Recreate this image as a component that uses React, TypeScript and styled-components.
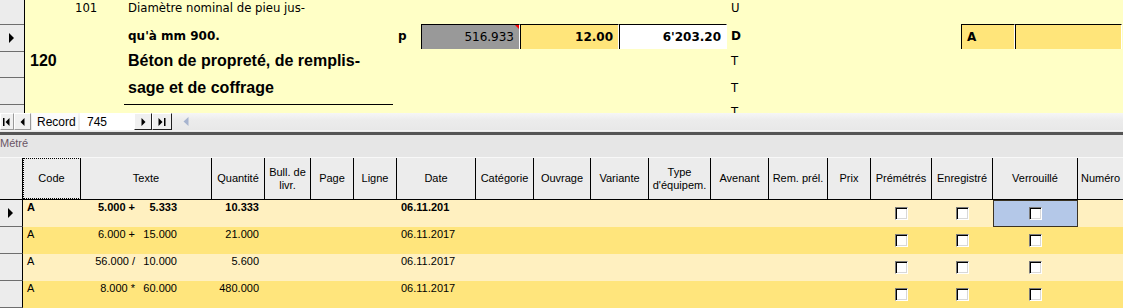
import React from 'react';
import styled, { createGlobalStyle, css } from 'styled-components';

const GlobalStyle = createGlobalStyle`
  html, body { margin: 0; padding: 0; background: #e6e6e6; }
  body {
    font-family: "Liberation Sans", Arial, sans-serif;
    font-size: 11px;
    color: #000;
    overflow: hidden;
  }
  * { box-sizing: border-box; }
`;

const TAHOMA = `"DejaVu Sans", "Liberation Sans", sans-serif`;
const ARIAL = `"Liberation Sans", Arial, sans-serif`;

const Screen = styled.div`
  width: 1123px;
  height: 308px;
  overflow: hidden;
  display: flex;
  flex-direction: column;
  background: #e6e6e6;
`;

/* ---------- top form ---------- */

const FormArea = styled.div`
  height: 113px;
  flex: none;
  display: flex;
  background: #ffffc6;
  overflow: hidden;
`;

const SelectorColumn = styled.div`
  width: 25px;
  flex: none;
  background: #ececec;
  border-right: 1px solid #000;
  display: flex;
  flex-direction: column;
`;

const SelectorCell = styled.div<{ $h: number; $last?: boolean }>`
  height: ${(p) => p.$h}px;
  flex: none;
  border-bottom: ${(p) => (p.$last ? 'none' : '1px solid #6e6e6e')};
  display: flex;
  align-items: center;
  justify-content: center;
`;

const FormGrid = styled.div`
  flex: 1;
  display: grid;
  grid-template-columns: 47px 52px 269px 28px 99px 99px 108px 234px 54px 107px 1fr;
  grid-template-rows: 24px 26px 27px 28px 1fr;
`;

const FormText = styled.div<{
  $col: number;
  $row: number;
  $bold?: boolean;
  $size?: number;
  $family?: string;
  $pl?: number;
  $lift?: number;
  $underline?: boolean;
}>`
  grid-column: ${(p) => p.$col};
  grid-row: ${(p) => p.$row};
  display: flex;
  align-items: center;
  white-space: nowrap;
  font-family: ${(p) => p.$family || TAHOMA};
  font-size: ${(p) => p.$size || 11.7}px;
  font-weight: ${(p) => (p.$bold ? 700 : 400)};
  padding-left: ${(p) => p.$pl ?? 4}px;
  padding-bottom: ${(p) => p.$lift ?? 0}px;
  ${(p) =>
    p.$underline &&
    css`
      border-bottom: 1px solid #000;
    `}
`;

const FieldBox = styled.div<{ $col: number; $tone: 'gray' | 'yellow' | 'white'; $bold?: boolean; $left?: boolean }>`
  grid-column: ${(p) => p.$col};
  grid-row: 2;
  height: 25px;
  position: relative;
  border-top: 1px solid #000;
  border-left: 1px solid #000;
  border-right: 1px solid #fff;
  background: ${(p) => (p.$tone === 'gray' ? '#999999' : p.$tone === 'yellow' ? '#ffe57a' : '#ffffff')};
  display: flex;
  align-items: center;
  justify-content: ${(p) => (p.$left ? 'flex-start' : 'flex-end')};
  padding: 0 5px 1px 5px;
  font-family: ${TAHOMA};
  font-size: 12px;
  font-weight: ${(p) => (p.$bold ? 700 : 400)};
  color: #000;
`;

const CommentMark = styled.span`
  position: absolute;
  top: 0;
  right: 0;
  width: 0;
  height: 0;
  border-top: 4px solid #ff0000;
  border-left: 4px solid transparent;
`;

/* ---------- navigation bar ---------- */

const NavBar = styled.div`
  height: 18px;
  flex: none;
  display: flex;
  align-items: stretch;
  background: linear-gradient(#f6f6f6 0%, #ececec 40%, #e8e8e8 100%);
  border-bottom: 1px solid #f2f2f2;
`;

const NavButton = styled.div<{ $w: number; $dark?: boolean }>`
  width: ${(p) => p.$w}px;
  flex: none;
  display: flex;
  align-items: center;
  justify-content: center;
  background: #f0f0f0;
  border: 1px solid;
  border-color: #ffffff ${(p) => (p.$dark ? '#202020' : '#9a9a9a')} ${(p) => (p.$dark ? '#202020' : '#9a9a9a')} #ffffff;
`;

const NavLabel = styled.div`
  width: 46px;
  flex: none;
  margin-left: 1px;
  display: flex;
  align-items: center;
  padding-left: 5px;
  background: #fbfbfb;
  font-family: ${ARIAL};
  font-size: 12px;
`;

const NavInput = styled.div`
  width: 54px;
  flex: none;
  margin-left: 2px;
  display: flex;
  align-items: center;
  padding-left: 7px;
  background: #ffffff;
  font-family: ${ARIAL};
  font-size: 12px;
`;

const ScrollArrow = styled.div`
  width: 20px;
  flex: none;
  display: flex;
  align-items: center;
  justify-content: center;
  margin-left: 4px;
`;

const Separator = styled.div`
  height: 4px;
  flex: none;
  background: #555555;
  border-top: 1px solid #e8e8e8;
`;

const Caption = styled.div`
  height: 22px;
  flex: none;
  padding: 2px 0 0 0;
  font-family: ${ARIAL};
  font-size: 11px;
  color: #6a5565;
  background: #e6e6e6;
`;

/* ---------- datasheet ---------- */

const COLUMNS = '23px 58px 131px 53px 46px 43px 43px 79px 58px 57px 58px 62px 58px 59px 43px 61px 61px 85px 1fr';

const HeaderRow = styled.div`
  height: 43px;
  flex: none;
  display: grid;
  grid-template-columns: ${COLUMNS};
  background: #ececec;
  border-top: 1px solid #f8f8f8;
  border-bottom: 1px solid #000;
`;

const HeaderCell = styled.div<{ $focus?: boolean; $last?: boolean }>`
  display: flex;
  align-items: center;
  justify-content: center;
  text-align: center;
  white-space: pre-line;
  line-height: 13px;
  font-size: 11px;
  border-right: ${(p) => (p.$last ? 'none' : '1px solid #000')};
  ${(p) =>
    p.$focus &&
    css`
      outline: 1px dotted #000;
      outline-offset: -1px;
    `}
`;

const DataRow = styled.div<{ $alt: boolean }>`
  height: 27px;
  flex: none;
  display: grid;
  grid-template-columns: ${COLUMNS};
  background: ${(p) => (p.$alt ? '#ffe57c' : '#fff0c0')};
`;

const RowSelector = styled.div`
  background: #ececec;
  border-right: 1px solid #000;
  border-bottom: 1px solid #6e6e6e;
  display: flex;
  align-items: center;
  justify-content: center;
`;

const Cell = styled.div<{ $align?: 'left' | 'right' | 'center'; $bold?: boolean; $pl?: number; $pr?: number }>`
  display: flex;
  align-items: flex-start;
  justify-content: ${(p) => (p.$align === 'right' ? 'flex-end' : p.$align === 'center' ? 'center' : 'flex-start')};
  padding: 1px ${(p) => p.$pr ?? 0}px 0 ${(p) => p.$pl ?? 0}px;
  line-height: 13px;
  font-size: 11px;
  font-weight: ${(p) => (p.$bold ? 700 : 400)};
  white-space: nowrap;
  overflow: hidden;
`;

const CheckCell = styled.div<{ $selected?: boolean }>`
  display: flex;
  align-items: center;
  justify-content: center;
  ${(p) =>
    p.$selected &&
    css`
      background: #b4c8e8;
      border: 1px solid #3a3222;
    `}
`;

const CheckBox = styled.span`
  width: 13px;
  height: 13px;
  display: block;
  background: #ffffff;
  border: 1px solid;
  border-color: #7a7a7a #ffffff #ffffff #7a7a7a;
  box-shadow: inset 1px 1px 0 #000, inset -1px -1px 0 #d8d8d8;
`;

const Part = styled.span<{ $w: number }>`
  display: inline-block;
  width: ${(p) => p.$w}px;
  text-align: right;
  white-space: pre;
`;

/* ---------- icons ---------- */

const RecordArrow = () => (
  <svg width="6" height="10" viewBox="0 0 6 10">
    <polygon points="0,0 5,5 0,10" fill="#000" />
  </svg>
);

const FirstIcon = () => (
  <svg width="8" height="8" viewBox="0 0 8 8">
    <rect x="0" y="0" width="1.5" height="8" fill="#000" />
    <polygon points="6.5,0 6.5,8 2.5,4" fill="#000" />
  </svg>
);
const PrevIcon = () => (
  <svg width="5" height="8" viewBox="0 0 5 8">
    <polygon points="4.5,0 4.5,8 0.5,4" fill="#000" />
  </svg>
);
const NextIcon = () => (
  <svg width="5" height="8" viewBox="0 0 5 8">
    <polygon points="0.5,0 0.5,8 4.5,4" fill="#000" />
  </svg>
);
const LastIcon = () => (
  <svg width="8" height="8" viewBox="0 0 8 8">
    <polygon points="0.5,0 0.5,8 4.5,4" fill="#000" />
    <rect x="6" y="0" width="1.5" height="8" fill="#000" />
  </svg>
);
const ScrollLeftIcon = () => (
  <svg width="6" height="9" viewBox="0 0 6 9">
    <polygon points="5.5,0 5.5,9 0.5,4.5" fill="#a7b4cf" />
  </svg>
);

/* ---------- data ---------- */

const headers: { label: string; focus?: boolean }[] = [
  { label: '' },
  { label: 'Code', focus: true },
  { label: 'Texte' },
  { label: 'Quantité' },
  { label: 'Bull. de\nlivr.' },
  { label: 'Page' },
  { label: 'Ligne' },
  { label: 'Date' },
  { label: 'Catégorie' },
  { label: 'Ouvrage' },
  { label: 'Variante' },
  { label: "Type\nd'équipem." },
  { label: 'Avenant' },
  { label: 'Rem. prél.' },
  { label: 'Prix' },
  { label: 'Prémétrés' },
  { label: 'Enregistré' },
  { label: 'Verrouillé' },
  { label: 'Numéro' },
];

const rows = [
  { code: 'A', a: '5.000 +', b: '5.333', qty: '10.333', date: '06.11.201', current: true },
  { code: 'A', a: '6.000 +', b: '15.000', qty: '21.000', date: '06.11.2017' },
  { code: 'A', a: '56.000 /', b: '10.000', qty: '5.600', date: '06.11.2017' },
  { code: 'A', a: '8.000 *', b: '60.000', qty: '480.000', date: '06.11.2017' },
];

export default function App() {
  return (
    <Screen>
      <GlobalStyle />
      <FormArea>
        <SelectorColumn>
          <SelectorCell $h={25} />
          <SelectorCell $h={27}>
            <RecordArrow />
          </SelectorCell>
          <SelectorCell $h={26} />
          <SelectorCell $h={27} />
          <SelectorCell $h={8} $last />
        </SelectorColumn>
        <FormGrid>
          <FormText $col={2} $row={1} $pl={3} $lift={8}>101</FormText>
          <FormText $col={3} $row={1} $lift={8}>Diamètre nominal de pieu jus-</FormText>
          <FormText $col={8} $row={1} $lift={8}>U</FormText>

          <FormText $col={3} $row={2} $bold $size={12} $lift={2}>qu'à mm 900.</FormText>
          <FormText $col={4} $row={2} $bold $size={12} $pl={5} $lift={2}>p</FormText>
          <FieldBox $col={5} $tone="gray">
            516.933
            <CommentMark />
          </FieldBox>
          <FieldBox $col={6} $tone="yellow" $bold>12.00</FieldBox>
          <FieldBox $col={7} $tone="white" $bold>6'203.20</FieldBox>
          <FormText $col={8} $row={2} $bold $size={12} $lift={2}>D</FormText>
          <FieldBox $col={9} $tone="yellow" $bold $left>A</FieldBox>
          <FieldBox $col={10} $tone="yellow" />

          <FormText $col={1} $row={3} $bold $size={16} $family={ARIAL} $pl={5} $lift={5}>120</FormText>
          <FormText $col={3} $row={3} $bold $size={16} $family={ARIAL} $lift={5}>
            Béton de propreté, de remplis-
          </FormText>
          <FormText $col={8} $row={3} $lift={5}>T</FormText>

          <FormText $col={3} $row={4} $bold $size={16} $family={ARIAL} $lift={6} $underline>
            sage et de coffrage
          </FormText>
          <FormText $col={8} $row={4} $lift={6}>T</FormText>
          <FormText $col={8} $row={5} $lift={0}>T</FormText>
        </FormGrid>
      </FormArea>

      <NavBar>
        <NavButton $w={14}>
          <FirstIcon />
        </NavButton>
        <NavButton $w={17}>
          <PrevIcon />
        </NavButton>
        <NavLabel>Record</NavLabel>
        <NavInput>745</NavInput>
        <NavButton $w={18} $dark>
          <NextIcon />
        </NavButton>
        <NavButton $w={20} $dark>
          <LastIcon />
        </NavButton>
        <ScrollArrow>
          <ScrollLeftIcon />
        </ScrollArrow>
      </NavBar>
      <Separator />
      <Caption>Métré</Caption>

      <HeaderRow>
        {headers.map((h, i) => (
          <HeaderCell key={i} $focus={h.focus} $last={i === headers.length - 1}>
            {h.label}
          </HeaderCell>
        ))}
      </HeaderRow>

      {rows.map((r, i) => (
        <DataRow key={i} $alt={i % 2 === 1}>
          <RowSelector>{r.current && <RecordArrow />}</RowSelector>
          <Cell $pl={4} $bold={r.current}>{r.code}</Cell>
          <Cell $bold={r.current}>
            <Part $w={54}>{r.a}</Part>
            <Part $w={42}>{r.b}</Part>
          </Cell>
          <Cell $align="right" $pr={6} $bold={r.current}>{r.qty}</Cell>
          <Cell />
          <Cell />
          <Cell />
          <Cell $pl={4} $bold={r.current}>{r.date}</Cell>
          <Cell />
          <Cell />
          <Cell />
          <Cell />
          <Cell />
          <Cell />
          <Cell />
          <CheckCell>
            <CheckBox />
          </CheckCell>
          <CheckCell>
            <CheckBox />
          </CheckCell>
          <CheckCell $selected={r.current}>
            <CheckBox />
          </CheckCell>
          <Cell />
        </DataRow>
      ))}
    </Screen>
  );
}
